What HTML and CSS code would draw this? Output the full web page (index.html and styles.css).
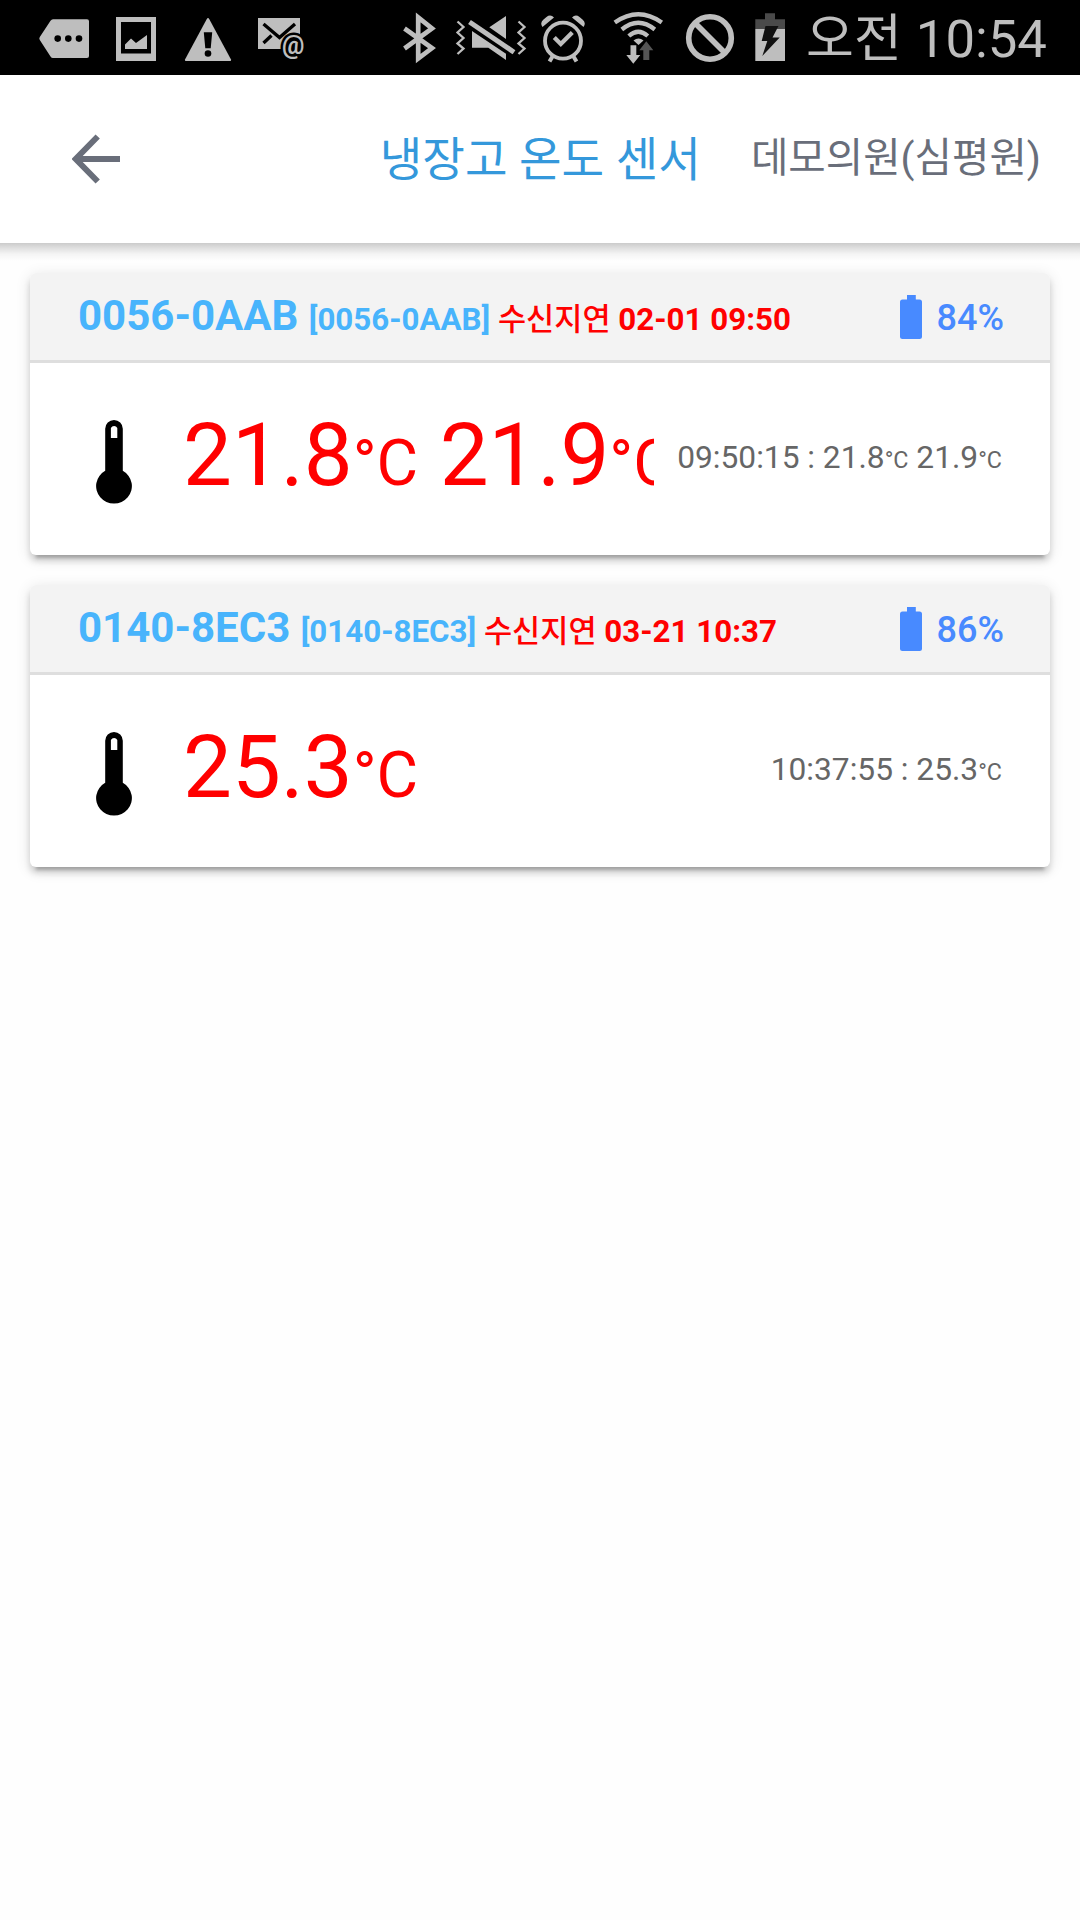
FILE: index.html
```html
<!DOCTYPE html>
<html lang="ko">
<head>
<meta charset="utf-8">
<title>냉장고 온도 센서</title>
<link rel="stylesheet" href="styles.css">
</head>
<body>
<div class="statusbar">
  <svg class="notifications" width="320" height="75" viewBox="0 0 320 75" fill="#bebebe">
    <path d="M53 19.3H87a2 2 0 0 1 2 2V56a2 2 0 0 1-2 2H53q-1.500 0-2.500-1.500L39.800 40q-1-1.500 0-3L50.500 20.800q1-1.500 2.500-1.500z"/>
    <g fill="#000"><circle cx="57.700" cy="38.600" r="3.300"/><circle cx="68.300" cy="38.600" r="3.300"/><circle cx="79" cy="38.600" r="3.300"/></g>
    <path fill-rule="evenodd" d="M116 17h40v44h-40zM121 22v31.500h30V22z"/>
    <path d="M125 49v-4.500l6-6 5 4.500 11-8v14z"/>
    <path d="M206.800 19q1.200-2 2.400 0L231 59.500q.5 1.500-1 1.500H186q-1.500 0-1-1.500z"/>
    <path fill="#000" d="M203.800 32.300h8.400l-1.500 16h-5.400z"/><circle cx="208" cy="53.500" r="3.300" fill="#000"/>
    <path d="M258 18h42v31h-42z"/>
    <path d="M263.500 24L279.500 37.500 295 24M263.500 43l8-7.500" fill="none" stroke="#000" stroke-width="3.300"/>
    <text class="at" x="282" y="53.500">@</text>
  </svg>
  <svg class="indicators" width="400" height="75" viewBox="400 0 400 75" fill="#bebebe">
    <path d="M404.500 28.500L432 48 418.200 58.500V17.500L432 28.500 404.500 48.500" fill="none" stroke="#bebebe" stroke-width="4.700"/>
    <g fill="none" stroke="#bebebe" stroke-width="2.300"><path d="M457.500 21.500l6 5.500-6 5.500 6 5.500-6 5.500 6 5-6 5.500M518.500 21.500l6 5.500-6 5.500 6 5.500-6 5.500 6 5-6 5.500"/></g>
    <path d="M472 31v16.700h16.300L506 60v-6.300zM489.300 27.300L506 16v23z"/>
    <path d="M469.500 22L514 52.200" stroke="#bebebe" stroke-width="5"/>
    <g fill="none" stroke="#bebebe"><circle cx="563" cy="40.700" r="18" stroke-width="3.800"/><path d="M554.300 37.500l6.500 6.500 11.500-11.500" stroke-width="4.300"/><path d="M552.500 56.500l-3 5M573.500 56.500l3 5" stroke-width="4"/></g>
    <path d="M542.500 27q-3-4 1-7.500l3-2.500q4-3 7.500.5zM583.500 27q3-4-1-7.500l-3-2.500q-4-3-7.500.5z"/>
    <g fill="none" stroke="#bebebe" stroke-width="4.300"><path d="M614.800 22.500Q638.300 6 661.800 22.500M621.800 29.500Q638.300 16 654.800 29.500M628.800 36Q638.300 27.500 647.800 36"/></g>
    <path d="M633.500 40.500q5-4 10 0l-5 4.500z"/>
    <path d="M630.500 45.300h5.800V55h4l-7 8.700-7-8.700h4.200z"/>
    <path fill="#555" d="M646.300 41.300l7 8.900h-4v9.800h-6v-9.800h-4z"/>
    <circle cx="710" cy="38" r="21.300" fill="none" stroke="#bebebe" stroke-width="5.600"/><path d="M696.500 24.500l27 27" stroke="#bebebe" stroke-width="5.600"/>
    <path fill="#4a4a4a" d="M765 13.300h10v6h10V29h-29.700v-9.700H765z"/><path d="M755.300 29H785v32h-29.700z"/>
    <path fill="#111" d="M765.500 26h13l-6 11.500h7.200L762.300 56l5-15h-5.600z"/>
  </svg>
  <div class="clock"><span class="ampm">오전</span> <span>10:54</span></div>
</div>
<header class="toolbar">
  <svg class="back" width="48" height="50" viewBox="0 0 48 50"><path d="M48 25H5M25.700 2.500L3.700 25 25.700 47.500" fill="none" stroke="#696e7a" stroke-width="6"/></svg>
  <h1 class="title">냉장고 온도 센서</h1>
  <span class="clinic">데모의원(심평원)</span>
</header>
<main class="sensors">
  <section class="card">
    <div class="card-head">
      <div class="name">0056-0AAB <span class="id">[0056-0AAB] </span><span class="delay"><span class="ko">수신지연</span> 02-01 09:50</span></div>
      <div class="battery"><svg width="22" height="44" viewBox="0 0 22 44"><path d="M7 0h8.800v4.400H19.500Q22 4.400 22 7V41.500q0 2.500-2.500 2.500h-17Q0 44 0 41.500V7Q0 4.400 2.500 4.400H7z" fill="#488aff"/></svg><span>84%</span></div>
    </div>
    <div class="card-body">
      <svg class="thermo" width="36" height="84" viewBox="0 0 36 84"><path fill-rule="evenodd" d="M9.200 8.800a8.800 8.800 0 0 1 17.600 0V50.800A17.900 17.500 0 1 1 9.200 50.800zM14.900 8v10h6.400V8q-1-2-3.200-2t-3.200 2z"/></svg>
      <div class="temp">21.8<small>°C</small> 21.9<small>°C</small></div>
      <div class="log">09:50:15 : 21.8<small>°C</small> 21.9<small>°C</small></div>
    </div>
  </section>
  <section class="card">
    <div class="card-head">
      <div class="name">0140-8EC3 <span class="id">[0140-8EC3] </span><span class="delay"><span class="ko">수신지연</span> 03-21 10:37</span></div>
      <div class="battery"><svg width="22" height="44" viewBox="0 0 22 44"><path d="M7 0h8.800v4.400H19.500Q22 4.400 22 7V41.500q0 2.500-2.500 2.500h-17Q0 44 0 41.500V7Q0 4.400 2.500 4.400H7z" fill="#488aff"/></svg><span>86%</span></div>
    </div>
    <div class="card-body">
      <svg class="thermo" width="36" height="84" viewBox="0 0 36 84"><path fill-rule="evenodd" d="M9.200 8.800a8.800 8.800 0 0 1 17.600 0V50.800A17.900 17.500 0 1 1 9.200 50.800zM14.900 8v10h6.400V8q-1-2-3.200-2t-3.200 2z"/></svg>
      <div class="temp">25.3<small>°C</small></div>
      <div class="log">10:37:55 : 25.3<small>°C</small></div>
    </div>
  </section>
</main>
</body>
</html>
```
FILE: styles.css
```css
* { box-sizing: border-box; }
body {
  margin: 0;
  min-height: 1920px;
  background: #fefefe;
  font-family: Roboto, "Noto Sans CJK KR", sans-serif;
}
svg { display: block; flex: none; }
.statusbar {
  display: flex;
  justify-content: space-between;
  height: 75px;
  padding-right: 33px;
  background: #000;
  color: #bebebe;
}
.indicators { margin-left: 80px; }
.at {
  font: 700 25px Roboto, sans-serif;
  stroke: #000;
  stroke-width: 5px;
  paint-order: stroke;
}
.clock {
  flex: 1;
  display: flex;
  justify-content: flex-end;
  gap: 14px;
  font-size: 52.7px;
  line-height: 79px;
  white-space: nowrap;
}
.ampm { font-size: 52px; }
.toolbar {
  display: flex;
  align-items: center;
  height: 168px;
  padding: 0 39px 0 72px;
  background: #fff;
}
.title {
  margin: 2px 50px 0 auto;
  font-size: 46.3px;
  font-weight: 400;
  line-height: 60px;
  color: #3498db;
}
.clinic {
  margin-bottom: 3px;
  font-size: 40.7px;
  line-height: 60px;
  color: #696e7a;
}
.sensors {
  display: flex;
  flex-direction: column;
  gap: 30px;
  padding: 30px;
  background: linear-gradient(rgba(0,0,0,.2), rgba(0,0,0,.12) 5px, rgba(0,0,0,.04) 11px, transparent 18px);
}
.card {
  height: 282px;
  border-radius: 6px;
  background: #fff;
  overflow: hidden;
  box-shadow: 0 6px 6px rgba(0,0,0,.14), 0 9px 3px -6px rgba(0,0,0,.2), 0 3px 15px rgba(0,0,0,.12);
}
.card-head {
  display: flex;
  justify-content: space-between;
  height: 90px;
  padding: 0 46px 0 48px;
  border-bottom: 3px solid #dedede;
  background: #f3f3f3;
}
.name {
  font-size: 42px;
  font-weight: 700;
  line-height: 86px;
  color: #48b4fc;
  white-space: nowrap;
}
.id, .delay { font-size: 31.3px; }
.ko { font-size: 30.6px; font-weight: 500; }
.delay { color: #f00; }
.battery {
  display: flex;
  align-items: center;
  gap: 15px;
  font-size: 36px;
  font-weight: 500;
  color: #488aff;
}
.battery span { padding-top: 2px; }
.card-body {
  display: flex;
  align-items: center;
  height: 192px;
  padding: 5px 48px 0 66px;
}
.temp {
  flex: none;
  width: 471px;
  margin-left: 51px;
  margin-top: -4px;
  overflow: hidden;
  font-size: 87px;
  line-height: 120px;
  color: #f00;
  white-space: nowrap;
}
.temp small, .log small { font-size: .735em; }
.log {
  margin-left: auto;
  margin-top: -9px;
  font-size: 31.7px;
  color: #666;
  white-space: nowrap;
}
```
